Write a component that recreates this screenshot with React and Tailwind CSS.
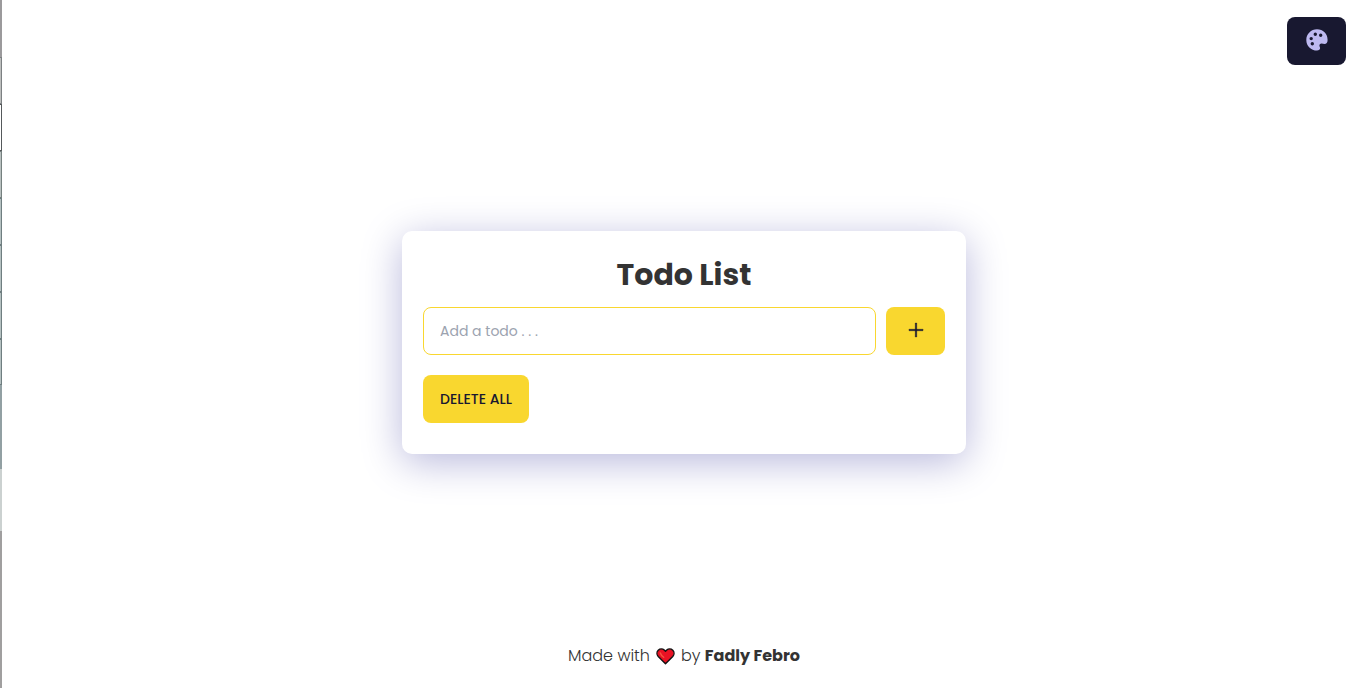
import { AiOutlinePlus } from "react-icons/ai";

function Palette() {
  return (
    <svg viewBox="0 0 22 22" className="mb-[2px] size-[22px]" aria-hidden="true">
      <path
        fill="currentColor"
        fillRule="evenodd"
        d="M11 .3C5 .3.3 5.100.3 11S5 21.600 11 21.600c2 0 3.100-1 3.100-2.500 0-1-.7-1.700-.7-2.600 0-1.200 1.100-2 2.300-1.900 1 .1 1.700.3 2.700.3 2 0 3.200-1.500 3.200-4C21.600 4.500 17 .3 11 .3ZM9.300 3.600a1.700 1.700 0 1 1 0 3.400 1.700 1.700 0 0 1 0-3.400ZM14.700 4.600a1.700 1.700 0 1 1 0 3.400 1.700 1.700 0 0 1 0-3.400ZM5.200 7.900a1.700 1.700 0 1 1 0 3.400 1.700 1.700 0 0 1 0-3.400ZM6.300 13a1.700 1.700 0 1 1 0 3.400 1.700 1.700 0 0 1 0-3.400Z"
      />
    </svg>
  );
}

function Heart() {
  return (
    <svg viewBox="0 0 20 18" className="mx-[6px] h-[17px] w-[19px]" role="img" aria-label="love">
      <path d="M10 16.6 2.3 9C.5 7 .6 4 2.3 2.3 4.2.5 7 .6 8.7 2.2L10 3.5l1.3-1.3C13 .6 15.8.5 17.7 2.3 19.4 4 19.5 7 17.7 9Z" fill="#e81224" stroke="#111" strokeWidth="1.5" strokeLinejoin="round" />
      <path d="M4.500 5.200c.6 1.800 1.800 3.300 3.600 4.600" fill="none" stroke="#f4523f" strokeWidth="1.500" strokeLinecap="round" />
    </svg>
  );
}

function EdgeStrip() {
  return (
    <div className="flex min-h-screen w-[2px] shrink-0 flex-col" aria-hidden="true">
      <div className="h-[57px] bg-[#9b9a9c]" />
      <div className="h-[47px] border-y border-r border-[#7c8082] bg-[#bdbfbe]" />
      <div className="h-[47px] border-y border-r border-[#55595b] bg-white" />
      <div className="h-[47px] border-y border-r border-[#75807f] bg-[#b9c1c0]" />
      <div className="h-[47px] border-y border-r border-[#6f7e80] bg-[#b5c1c1]" />
      <div className="h-[47px] border-y border-r border-[#6f7e80] bg-[#b5c1c1]" />
      <div className="h-[47px] border-y border-r border-[#6f7e80] bg-[#b5c1c1]" />
      <div className="h-[46px] border-y border-r border-[#6f7e80] bg-[#b5c1c1]" />
      <div className="h-[84px] bg-[#92a0a3]" />
      <div className="h-[62px] bg-[#cbd1d0]" />
      <div className="grow bg-[#a09f9f]" />
    </div>
  );
}

export default function App() {
  return (
    <div className="flex min-h-screen bg-white font-['Poppins','Inter',sans-serif] text-[#333333]">
      <EdgeStrip />
      <div className="grid grow grid-rows-[1fr_auto_1fr] pb-[3px]">
        <header className="flex items-start justify-end pt-[17px] pr-5">
          <button type="button" aria-label="Change theme" className="flex h-12 w-[59px] items-center justify-center rounded-lg bg-[#181830] text-[#bdb9f0]">
            <Palette />
          </button>
        </header>
        <main className="mx-auto w-full max-w-[564px] rounded-[10px] bg-white px-[21px] pt-6 pb-[31px] shadow-[0_8px_40px_#b8b8dc]">
          <h1 className="text-center text-[30px] leading-10 font-bold">Todo List</h1>
          <form className="mt-3 flex gap-[10px]" onSubmit={(e) => e.preventDefault()}>
            <input type="text" aria-label="Add a todo" placeholder="Add a todo . . ." className="h-12 min-w-0 grow rounded-lg border border-[#f9d72f] px-4 text-sm outline-none placeholder:text-[#9ca3af]" />
            <button type="submit" aria-label="Add" className="flex h-12 w-[59px] items-center justify-center rounded-lg bg-[#f9d72f] text-[#181830]">
              <AiOutlinePlus size={20} strokeWidth={18} className="mb-[2px]" />
            </button>
          </form>
          <button type="button" className="mt-5 block h-12 rounded-lg bg-[#f9d72f] px-[17px] text-sm font-medium text-[#181830] uppercase">Delete all</button>
        </main>
        <footer className="flex items-end justify-center pb-[17px] leading-6">
          <p className="flex items-center whitespace-pre font-light">
            Made with<Heart />by <strong className="font-bold">Fadly Febro</strong>
          </p>
        </footer>
      </div>
    </div>
  );
}
